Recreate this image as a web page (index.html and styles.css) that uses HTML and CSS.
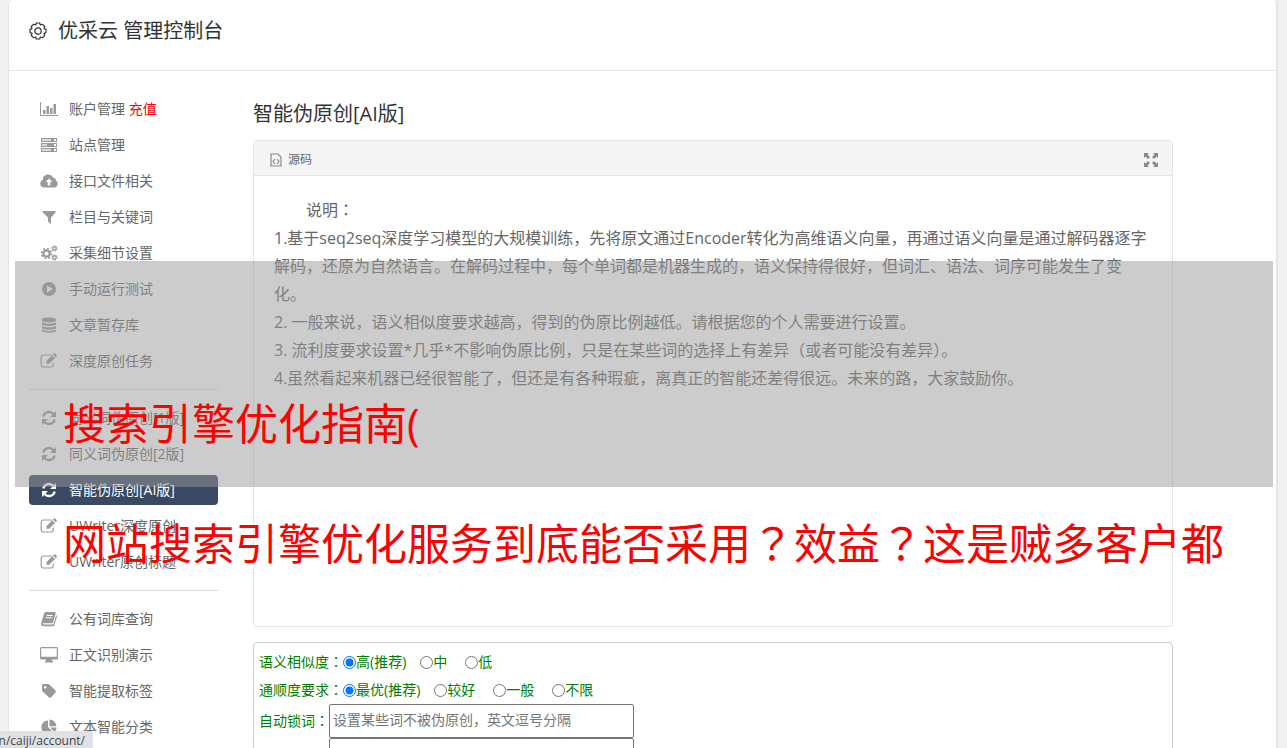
FILE: index.html
```html
<!DOCTYPE html>
<html lang="zh-CN">
<head>
<meta charset="utf-8">
<title>优采云 管理控制台</title>
<link rel="stylesheet" href="styles.css">
</head>
<body>
<svg class="sprite" aria-hidden="true">
  <symbol id="chart" viewBox="0 0 18 16"><path d="M0 1h1v13h17v1H0z"/><path d="M3 9h2.500v4H3zM6.500 5H9v8H6.500zM10 7h2.500v6H10zM13.500 3H16v10h-2.500z"/></symbol>
  <symbol id="server" viewBox="0 0 18 16"><path opacity=".35" d="M2 2h9v2H2zM2 7h5v2H2zM2 12h9v2H2z"/><path fill-rule="evenodd" d="M1 1h16v4H1zM2 2v2h9V2zM14 2v2h2V2zM1 6h16v4H1zM2 7v2h5V7zM14 7v2h2V7zM1 11h16v4H1zM2 12v2h9v-2zM14 12v2h2v-2z"/></symbol>
  <symbol id="cloud" viewBox="0 0 18 16"><path fill-rule="evenodd" d="M4.500 14.500C2 14.500.300 13 .300 10.700c0-1.800 1-3.100 2.500-3.700C2.600 3.800 5 1.500 8 1.500c2.300 0 4.100 1.200 4.900 3.200 1.800-.4 3.300 1.100 2.900 2.900 1.200.5 1.900 1.700 1.900 3.200 0 2.200-1.600 3.700-3.700 3.700zM9 5.500 5.500 9h2.200v3.500h2.600V9h2.200z"/></symbol>
  <symbol id="filter" viewBox="0 0 18 16"><path d="M3 2h12.500v1.500L11 8.500V15l-3-2.500v-4L2.700 3.500z"/></symbol>
  <symbol id="cogs" viewBox="0 0 18 16"><g fill="none" stroke="currentColor"><circle cx="6.500" cy="8.500" r="3.200" stroke-width="2.200"/><circle cx="6.500" cy="8.500" r="5" stroke-width="1.600" stroke-dasharray="1.960 1.960"/><circle cx="14.500" cy="3.500" r="1.700" stroke-width="1.400"/><circle cx="14.500" cy="3.500" r="2.700" stroke-width="1" stroke-dasharray="1.400 1.430"/><circle cx="14.500" cy="12.500" r="1.700" stroke-width="1.400"/><circle cx="14.500" cy="12.500" r="2.700" stroke-width="1" stroke-dasharray="1.400 1.430"/></g></symbol>
  <symbol id="play" viewBox="0 0 18 16"><path fill-rule="evenodd" d="M9 1a7 7 0 1 0 0 14A7 7 0 0 0 9 1zM7 4.500v7L13 8z"/></symbol>
  <symbol id="db" viewBox="0 0 18 16"><path d="M2 2.500C2-.3 16-.3 16 2.500v1C16 6 2 6 2 3.500zM2 5.300c3 1.800 11 1.800 14 0v1.900c0 2.300-14 2.300-14 0zM2 9c3 1.800 11 1.800 14 0v1.900c0 2.300-14 2.300-14 0zM2 12.600c3 1.800 11 1.800 14 0v1.200c0 2.500-14 2.500-14 0z"/></symbol>
  <symbol id="edit" viewBox="0 0 18 16"><path fill="none" stroke="currentColor" stroke-width="1.200" d="M12 2H3.500A2.300 2.300 0 0 0 1.200 4.300v7.400A2.300 2.300 0 0 0 3.500 14H11a2.300 2.300 0 0 0 2.300-2.300V9.500"/><path d="m6.500 8 5.800-5.800L15 4.900l-5.800 5.800H6.500zM13 1.500l1-1q.7-.4 1.300.1l1.400 1.400q.5.700 0 1.300l-1 1z"/></symbol>
  <symbol id="sync" viewBox="0 0 18 16"><path fill="none" stroke="currentColor" stroke-width="2.300" d="M3.300 6.500C4.400 1.500 10.500.600 13.800 4.200M14.700 9.500C13.600 14.500 7.500 15.400 4.200 11.800"/><path d="M16 1v6h-6zM2 15V9h6z"/></symbol>
  <symbol id="book" viewBox="0 0 18 16"><path fill-rule="evenodd" d="M5.500 1h9c1 0 1.500.7 1.200 1.600l-2.600 8.700c-.2.600-.7 1-1.400 1H3.200c-.6 0-.5 1.300.4 1.300h9c.6 0 .8-.3 1-.8l2.500-8.600c1 .4.900 1 .7 1.700l-2.400 8c-.3.800-.9 1.300-1.700 1.300H3.400C1.600 15.200.600 13.600 1.200 12l2.900-9.500C4.300 1.600 4.800 1 5.500 1zm1.200 3-.2.900h6l.3-.9zm-.7 2.300-.3.900h6.100l.3-.9z"/></symbol>
  <symbol id="screen" viewBox="0 0 18 16"><path fill-rule="evenodd" d="M1.500 0h15q1.500 0 1.500 1.500v9.700q0 1.300-1.500 1.300H12v1.500h1v1.500H5V14h1v-1.500H1.500Q0 12.500 0 11.200V1.500Q0 0 1.500 0zM1.200 1.200v8.600h15.600V1.200z"/></symbol>
  <symbol id="tag" viewBox="0 0 18 16"><path fill-rule="evenodd" d="M2 2.200Q2 1 3.200 1h4.700q.9 0 1.700.8l5.900 5.800q.9 1 0 1.900L11 14.600q-.9.900-1.800 0L3 8.700Q2 8 2 6.900zm3.200.8a1.300 1.300 0 1 0 0 2.600 1.300 1.300 0 0 0 0-2.600z"/></symbol>
  <symbol id="pie" viewBox="0 0 18 16"><path d="M8 1.500V8l4.700 4.700A6.600 6.600 0 1 1 8 1.500zM9.500.500a6.700 6.700 0 0 1 6.700 6.700H9.500zM10 8.500h6.500c0 1.800-.8 3.500-2 4.600z"/></symbol>
</svg>
<div class="app">
  <header class="top">
    <svg class="gear" viewBox="0 0 18 18" aria-hidden="true"><path d="m7.300 1 3.400 0 .7 2 2.100-.7 2.200 2.200-.7 2.100 2 .8v3.200l-2 .8.700 2.100-2.200 2.200-2.100-.7-.7 2H7.300l-.7-2-2.100.7-2.200-2.200.7-2.100-2-.8V7.400l2-.8-.7-2.100 2.200-2.200 2.100.7z"/><circle cx="9" cy="9" r="3.200"/></svg>
    <h1>优采云 管理控制台</h1>
  </header>
  <div class="body">
    <nav class="side">
      <a class="item" href="#"><svg><use href="#chart"/></svg><span>账户管理 <b>充值</b></span></a>
      <a class="item" href="#"><svg><use href="#server"/></svg>站点管理</a>
      <a class="item" href="#"><svg><use href="#cloud"/></svg>接口文件相关</a>
      <a class="item" href="#"><svg><use href="#filter"/></svg>栏目与关键词</a>
      <a class="item" href="#"><svg><use href="#cogs"/></svg>采集细节设置</a>
      <a class="item" href="#"><svg><use href="#play"/></svg>手动运行测试</a>
      <a class="item" href="#"><svg><use href="#db"/></svg>文章暂存库</a>
      <a class="item" href="#"><svg><use href="#edit"/></svg>深度原创任务</a>
      <hr>
      <a class="item" href="#"><svg><use href="#sync"/></svg>同义词伪原创[1版]</a>
      <a class="item" href="#"><svg><use href="#sync"/></svg>同义词伪原创[2版]</a>
      <a class="item active" href="#"><svg><use href="#sync"/></svg>智能伪原创[AI版]</a>
      <a class="item" href="#"><svg><use href="#edit"/></svg>UWriter深度原创</a>
      <a class="item" href="#"><svg><use href="#edit"/></svg>UWriter原创标题</a>
      <hr>
      <a class="item" href="#"><svg><use href="#book"/></svg>公有词库查询</a>
      <a class="item" href="#"><svg><use href="#screen"/></svg>正文识别演示</a>
      <a class="item" href="#"><svg><use href="#tag"/></svg>智能提取标签</a>
      <a class="item" href="#"><svg><use href="#pie"/></svg>文本智能分类</a>
    </nav>
    <main class="main">
      <h2>智能伪原创[AI版]</h2>
      <section class="editor">
        <div class="toolbar">
          <button type="button"><svg class="source" viewBox="0 0 12 14" aria-hidden="true"><path d="M1 1h7l3 3v9H1zM5 6 3 8.500 5 11M7 6l2 2.500L7 11"/></svg>源码</button>
          <button type="button" aria-label="全屏"><svg class="expand" viewBox="0 0 14 14" aria-hidden="true"><path d="M0 0h5L3.500 1.500 6 4 4 6 1.500 3.500 0 5zM14 0v5l-1.500-1.500L10 6 8 4l2.500-2.500L9 0zM0 14V9l1.500 1.500L4 8l2 2-2.500 2.500L5 14zM14 14H9l1.500-1.500L8 10l2-2 2.500 2.500L14 9z"/></svg></button>
        </div>
        <div class="content">
          <p class="lead">说明<span class="mid" lang="zh-TW">：</span></p>
          <p>1.基于seq2seq深度学习模型的大规模训练，先将原文通过Encoder转化为高维语义向量，再通过语义向量是通过解码器逐字解码，还原为自然语言。在解码过程中，每个单词都是机器生成的，语义保持得很好，但词汇、语法、词序可能发生了变化。</p>
          <p>2. 一般来说，语义相似度要求越高，得到的伪原比例越低。请根据您的个人需要进行设置。</p>
          <p>3. 流利度要求设置*几乎*不影响伪原比例，只是在某些词的选择上有差异（或者可能没有差异）。</p>
          <p>4.虽然看起来机器已经很智能了，但还是有各种瑕疵，离真正的智能还差得很远。未来的路，大家鼓励你。</p>
        </div>
      </section>
      <form class="options">
        <div class="row" role="radiogroup" aria-label="语义相似度"><span>语义相似度<span class="mid" lang="zh-TW">：</span></span>
          <label><input type="radio" name="sim" checked>高(推荐)</label><label><input type="radio" name="sim">中</label><label><input type="radio" name="sim">低</label></div>
        <div class="row" role="radiogroup" aria-label="通顺度要求"><span>通顺度要求<span class="mid" lang="zh-TW">：</span></span>
          <label><input type="radio" name="flu" checked>最优(推荐)</label><label><input type="radio" name="flu">较好</label><label><input type="radio" name="flu">一般</label><label><input type="radio" name="flu">不限</label></div>
        <div class="field"><label for="lock">自动锁词<span class="mid" lang="zh-TW">：</span></label><input id="lock" type="text" placeholder="设置某些词不被伪原创，英文逗号分隔"></div>
        <div class="field"><input class="second" type="text" aria-label="锁词"></div>
      </form>
    </main>
  </div>
</div>
<div class="banner"><p>搜索引擎优化指南(</p><p>网站搜索引擎优化服务到底能否采用<span class="mid" lang="zh-TW">？</span>效益<span class="mid" lang="zh-TW">？</span>这是贼多客户都</p></div>
<div class="status">n/caiji/account/</div>
</body>
</html>
```
FILE: styles.css
```css
* { box-sizing: border-box; }
body {
  margin: 0;
  height: 100vh;
  overflow: hidden;
  background: #f1f1f1;
  color: #666;
  font: 14px/20px "Open Sans", "Noto Sans CJK SC", sans-serif;
}
h1, h2, p { margin: 0; font-weight: 400; }
button { border: 0; padding: 0; background: none; color: inherit; font: inherit; }
.sprite { position: absolute; width: 0; height: 0; }
/* punctuation centred in its cell */
.mid { font-family: "Noto Sans CJK TC", sans-serif; line-height: 1; }

.app {
  height: 100vh;
  margin: 0 9px 0 8px;
  overflow: hidden;
  background: #fff;
  border: solid #e5e5e5;
  border-width: 0 2px 0 1px;
  border-radius: 5px 5px 0 0;
}
.top {
  display: flex;
  align-items: center;
  gap: 11px;
  height: 71px;
  padding: 0 20px 9px;
  border-bottom: 1px solid #e5e5e5;
}
.top h1 { color: #333; font-size: 20px; line-height: 28px; }
.gear { width: 18px; height: 18px; fill: none; stroke: #333; stroke-width: 1.200; stroke-linejoin: round; }

.body {
  display: grid;
  grid-template-columns: 189px 1fr;
  column-gap: 35px;
  padding: 23px 103px 0 20px;
}
.side { display: flex; flex-direction: column; gap: 6px; }
.side hr { width: 100%; margin: 7px 0; border: 0; border-top: 1px solid #ddd; }
.item {
  display: flex;
  align-items: center;
  gap: 11px;
  height: 30px;
  padding: 0 11px;
  border-radius: 4px;
  color: #666;
  text-decoration: none;
  white-space: nowrap;
}
.item svg { width: 18px; height: 16px; color: #999; fill: currentColor; }
.item b { color: #f00; font-weight: 400; }
.active { background: #394963; color: #fff; }
.active svg { color: #fff; }

.main { min-width: 0; padding-top: 5px; }
.main h2 { height: 41px; color: #333; font-size: 20px; line-height: 30px; }
.editor { border: 1px solid #e5e5e5; border-radius: 4px; }
.toolbar {
  display: flex;
  align-items: center;
  justify-content: space-between;
  height: 35px;
  padding: 3px 14px 0 16px;
  background: #f5f5f5;
  border-bottom: 1px solid #e5e5e5;
  border-radius: 4px 4px 0 0;
  font-size: 12px;
}
.toolbar button { display: flex; align-items: center; gap: 6px; }
.source { width: 12px; height: 14px; fill: none; stroke: #888; stroke-width: 1.200; }
.expand { width: 14px; height: 14px; fill: #888; }
.content { min-height: 450px; padding: 20px; font-size: 16px; line-height: 28px; }
.lead { text-indent: 2em; }

.options {
  margin-top: 15px;
  padding: 5px;
  border: 1px solid #ccc;
  border-radius: 4px;
  color: #008000;
}
.row { display: flex; align-items: center; height: 28px; }
.row label { display: flex; align-items: center; margin-right: 14px; }
.row label + label { margin-right: 18px; }
.row input { width: 13px; height: 13px; margin: 0; }
.field { display: flex; align-items: center; }
.field label { width: 70px; white-space: nowrap; }
.field input {
  width: 305px;
  height: 34px;
  padding: 0 3px 3px;
  border: 1px solid #767676;
  border-radius: 2px;
  font: inherit;
}
.field input::placeholder { color: #757575; }
.field .second { margin-left: 70px; }

.banner {
  position: absolute;
  top: 261px;
  left: 15px;
  right: 14px;
  height: 226px;
  padding: 103px 0 0 48px;
  background: rgba(153, 153, 153, 0.5);
  color: #f00;
  font-size: 43px;
  line-height: 120px;
  white-space: nowrap;
}
.status {
  position: absolute;
  left: 0;
  bottom: 0;
  display: flex;
  justify-content: flex-end;
  width: 93px;
  height: 17px;
  padding-right: 8px;
  overflow: hidden;
  background: #dee1e6;
  border-radius: 0 4px 0 0;
  color: #444;
  font-size: 12px;
  line-height: 20px;
}
```
